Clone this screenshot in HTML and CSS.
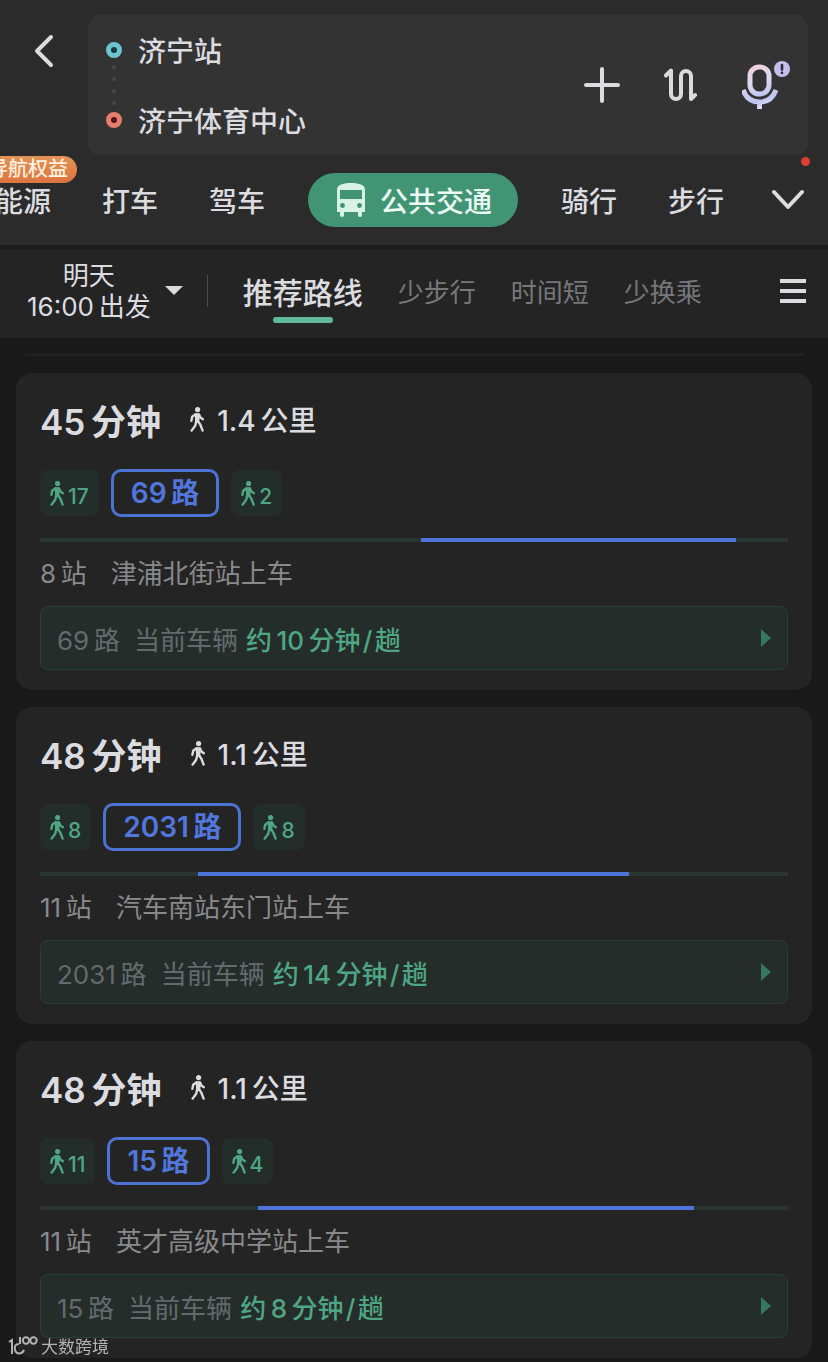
FILE: index.html
```html
<!DOCTYPE html>
<html lang="zh-CN">
  <head>
    <meta charset="UTF-8" />
    <meta name="viewport" content="width=device-width, initial-scale=1.0" />
    <title>公共交通路线</title>
    <link rel="stylesheet" href="styles.css">
  </head>
  <body>
    <svg class="symbols" aria-hidden="true">
      <symbol id="walker" viewBox="0 0 14 25">
        <circle cx="7.6" cy="2.6" r="2.6" fill="currentColor" />
        <path d="M4.800 6.200h4.200l1.100 1.400-.8 6.600-4.300.4z" fill="currentColor" />
        <path d="M5.600 7.200 2.200 9.800l-.8 4M9 7.400l1.400 3.200 2.500 1.600M6.400 13.600l-1.200 5.200-3.600 4.800M7.600 13.400l2.800 4.400 2.200 5.800" fill="none" stroke="currentColor" stroke-width="2.400" stroke-linecap="round" stroke-linejoin="round" />
      </symbol>
    </svg>

    <header class="header">
      <div class="search-row">
        <button class="back-button" aria-label="返回">
          <svg width="20" height="34" viewBox="0 0 20 34"><path d="M17 3 3 17l14 14" /></svg>
        </button>
        <form class="search-box">
          <div class="places">
            <label class="place">
              <span class="dot dot-start"></span>
              <input type="text" value="济宁站" aria-label="起点" />
            </label>
            <div class="dots"><i></i><i></i><i></i><i></i></div>
            <label class="place">
              <span class="dot dot-end"></span>
              <input type="text" value="济宁体育中心" aria-label="终点" />
            </label>
          </div>
          <div class="search-actions">
            <button type="button" aria-label="添加途经点">
              <svg width="36" height="36" viewBox="0 0 36 36"><path d="M18 2v32M2 18h32" /></svg>
            </button>
            <button type="button" aria-label="交换起终点">
              <svg width="34" height="34" viewBox="0 0 34 34"><path d="M2 7.500 7 2.500V26a5 5 0 0 0 10 0V8a5 5 0 0 1 10 0v23l4-4" /></svg>
            </button>
            <button type="button" aria-label="语音">
              <svg width="50" height="50" viewBox="3 0 50 50">
                <defs>
                  <linearGradient id="micFill" x1="10" y1="4" x2="26" y2="48" gradientUnits="userSpaceOnUse">
                    <stop offset="0" stop-color="#f3ccd8" />
                    <stop offset="0.4" stop-color="#ddd8ee" />
                    <stop offset="0.8" stop-color="#bcc4f4" />
                    <stop offset="1" stop-color="#e0e2f4" />
                  </linearGradient>
                </defs>
                <rect x="11" y="7" width="19" height="27" rx="9" fill="none" stroke="url(#micFill)" stroke-width="5" />
                <path d="M4 30c3 8 9 12 16.500 12s13.500-4 16.500-12M20.500 42v7" fill="none" stroke="url(#micFill)" stroke-width="5" stroke-linecap="butt" />
                <circle cx="43" cy="9" r="8" fill="#c5bdea" stroke="none" />
                <path d="M43 5v4.500M43 12.700v.3" stroke="#2d2b3a" stroke-width="2.600" stroke-linecap="round" />
              </svg>
            </button>
          </div>
        </form>
      </div>
      <div class="mode-row">
        <nav class="modes">
          <a href="#" class="mode">能源<span class="promo">导航权益</span></a>
          <a href="#" class="mode">打车</a>
          <a href="#" class="mode">驾车</a>
          <a href="#" class="mode mode-active">
            <svg width="30" height="36" viewBox="0 0 30 36">
              <path fill="#d9f3e6" fill-rule="evenodd" d="M1 8C1 3 6 1 15 1s14 2 14 7v22h-3v3a2 2 0 0 1-4 0v-3H8v3a2 2 0 0 1-4 0v-3H1zM4 8v9h22V8z" />
              <circle cx="6.500" cy="23.500" r="2.400" fill="#3f8f72" />
              <circle cx="23.500" cy="23.500" r="2.400" fill="#3f8f72" />
            </svg>
            公共交通
          </a>
          <a href="#" class="mode">骑行</a>
          <a href="#" class="mode">步行</a>
        </nav>
        <button class="more-button" aria-label="更多出行方式">
          <svg width="32" height="22" viewBox="0 0 32 22"><path d="m2 3 14 15L30 3" /></svg>
          <span class="red-dot"></span>
        </button>
      </div>
    </header>

    <div class="filter-bar">
      <button class="depart-button">
        <span class="depart-text">明天<br />16:00&thinsp;出发</span>
        <span class="caret"></span>
      </button>
      <nav class="filters">
        <a href="#" class="filter filter-active">推荐路线</a>
        <a href="#" class="filter">少步行</a>
        <a href="#" class="filter">时间短</a>
        <a href="#" class="filter">少换乘</a>
      </nav>
      <button class="menu-button" aria-label="菜单">
        <svg width="26" height="24" viewBox="0 0 26 24"><path d="M0 2h26M0 12h26M0 22h26" /></svg>
      </button>
    </div>

    <main class="routes">
      <div class="list-edge"></div>

      <article class="card">
        <h2 class="summary">
          <span class="duration">45&thinsp;分钟</span>
          <svg class="walker"><use href="#walker" /></svg>
          <span class="distance">1.4&thinsp;公里</span>
        </h2>
        <div class="steps">
          <span class="walk"><svg class="walker"><use href="#walker" /></svg>17</span>
          <span class="line">69&thinsp;路</span>
          <span class="walk"><svg class="walker"><use href="#walker" /></svg>2</span>
        </div>
        <div class="track"><div class="ride" style="margin-left: 50.9%; width: 42.1%"></div></div>
        <p class="stops"><span>8&thinsp;站</span><span>津浦北街站上车</span></p>
        <button class="status"><span>69&thinsp;路</span><span class="status-label">当前车辆</span><strong>约&thinsp;10&thinsp;分钟&hairsp;/&hairsp;趟</strong><i class="arrow"></i></button>
      </article>

      <article class="card">
        <h2 class="summary">
          <span class="duration">48&thinsp;分钟</span>
          <svg class="walker"><use href="#walker" /></svg>
          <span class="distance">1.1&thinsp;公里</span>
        </h2>
        <div class="steps">
          <span class="walk"><svg class="walker"><use href="#walker" /></svg>8</span>
          <span class="line">2031&thinsp;路</span>
          <span class="walk"><svg class="walker"><use href="#walker" /></svg>8</span>
        </div>
        <div class="track"><div class="ride" style="margin-left: 21.1%; width: 57.6%"></div></div>
        <p class="stops"><span>11&thinsp;站</span><span>汽车南站东门站上车</span></p>
        <button class="status"><span>2031&thinsp;路</span><span class="status-label">当前车辆</span><strong>约&thinsp;14&thinsp;分钟&hairsp;/&hairsp;趟</strong><i class="arrow"></i></button>
      </article>

      <article class="card">
        <h2 class="summary">
          <span class="duration">48&thinsp;分钟</span>
          <svg class="walker"><use href="#walker" /></svg>
          <span class="distance">1.1&thinsp;公里</span>
        </h2>
        <div class="steps">
          <span class="walk"><svg class="walker"><use href="#walker" /></svg>11</span>
          <span class="line">15&thinsp;路</span>
          <span class="walk"><svg class="walker"><use href="#walker" /></svg>4</span>
        </div>
        <div class="track"><div class="ride" style="margin-left: 29.1%; width: 58.4%"></div></div>
        <p class="stops"><span>11&thinsp;站</span><span>英才高级中学站上车</span></p>
        <button class="status"><span>15&thinsp;路</span><span class="status-label">当前车辆</span><strong>约&thinsp;8&thinsp;分钟&hairsp;/&hairsp;趟</strong><i class="arrow"></i></button>
      </article>
    </main>

    <div class="watermark">
      <svg width="30" height="22" viewBox="0 0 30 22"><path d="M1 6l3-2v14M16 14c-2 4.500-8 4.500-9 0s1-6 4-6M12 1v7" /><circle cx="18" cy="4.500" r="3.200" /><circle cx="25.500" cy="4.500" r="3.200" /></svg>
      大数跨境
    </div>
  </body>
</html>
```
FILE: styles.css
```css
* {
  box-sizing: border-box;
}
body {
  margin: 0;
  background-color: #191919;
  color: #dcdce0;
  font-family: Inter, "Noto Sans CJK SC", sans-serif;
  font-size: 26px;
}
a {
  color: inherit;
  text-decoration: none;
}
button,
input {
  padding: 0;
  border: none;
  background: none;
  color: inherit;
  font: inherit;
}
button {
  cursor: pointer;
}
svg {
  display: block;
  flex-shrink: 0;
}
.symbols {
  position: absolute;
  width: 0;
  height: 0;
}

/* header */
.header {
  background-color: #2b2b2b;
  padding-top: 15px;
}
.search-row {
  display: flex;
  padding-right: 20px;
}
.back-button {
  width: 88px;
  height: 72px;
  display: flex;
  align-items: center;
  justify-content: center;
}
.back-button svg,
.search-actions svg,
.more-button svg {
  fill: none;
  stroke: #dcdce0;
  stroke-width: 4;
  stroke-linecap: round;
  stroke-linejoin: round;
}
.search-box {
  flex: 1;
  min-width: 0;
  height: 140px;
  display: flex;
  align-items: center;
  padding: 0 16px 0 18px;
  border-radius: 12px;
  background-color: #333333;
}
.places {
  flex: 1;
  min-width: 0;
}
.place {
  display: flex;
  align-items: center;
  gap: 16px;
  height: 36px;
}
.place input {
  flex: 1;
  min-width: 0;
  height: 36px;
  font-size: 28px;
  font-weight: 500;
  outline: none;
}
.dot {
  width: 16px;
  height: 16px;
  border-radius: 50%;
  border: 5px solid #6cc5d0;
  background-color: #173a40;
}
.dot-end {
  border-color: #e57e6c;
  background-color: #4a1c16;
}
.dots {
  width: 16px;
  height: 40px;
  margin: -3px 0;
  display: flex;
  flex-direction: column;
  align-items: center;
  justify-content: space-between;
}
.dots i {
  width: 4px;
  height: 4px;
  border-radius: 50%;
  background-color: #484848;
}
.search-actions {
  display: flex;
  align-items: center;
  gap: 44px;
}

/* travel modes */
.mode-row {
  display: flex;
  height: 90px;
}
.modes {
  flex: 1;
  min-width: 0;
  display: flex;
  align-items: center;
  justify-content: flex-end;
  gap: 51px;
  overflow: hidden;
  font-size: 28px;
  font-weight: 500;
}
.mode {
  position: relative;
  flex-shrink: 0;
}
.mode-active {
  display: flex;
  align-items: center;
  gap: 14px;
  height: 54px;
  margin: 0 -8px;
  padding: 0 26px 0 28px;
  border-radius: 27px;
  background-color: #419575;
  color: #ebfaf3;
}
.promo {
  position: absolute;
  right: -26px;
  bottom: 37px;
  padding: 0 9px;
  border-radius: 14px 14px 14px 0;
  background: linear-gradient(#e39255, #dc7440);
  color: #fff0df;
  font-size: 20px;
  line-height: 27px;
  white-space: nowrap;
}
.more-button {
  position: relative;
  width: 104px;
  display: flex;
  align-items: center;
  justify-content: flex-end;
  padding-right: 24px;
}
.red-dot {
  position: absolute;
  top: 2px;
  right: 18px;
  width: 9px;
  height: 9px;
  border-radius: 50%;
  background-color: #d9402f;
}

/* filters */
.filter-bar {
  display: flex;
  align-items: center;
  height: 93px;
  padding: 0 22px 6px 27px;
  border-top: 4px solid #1c1c1c;
  background-color: #242424;
}
.depart-button {
  display: flex;
  align-items: center;
  gap: 14px;
}
.depart-text {
  line-height: 31px;
}
.caret {
  border: 9px solid transparent;
  border-top: 9px solid #dcdce0;
  border-bottom: none;
}
.filters {
  flex: 1;
  display: flex;
  align-items: center;
  gap: 35px;
  margin-left: 24px;
  color: #77777a;
}
.filters::before {
  content: "";
  width: 1px;
  height: 32px;
  background-color: #4c4c4e;
}
.filter-active {
  position: relative;
  color: #dcdce0;
  font-size: 30px;
  font-weight: 500;
}
.filter-active::after {
  content: "";
  position: absolute;
  left: 25%;
  right: 25%;
  bottom: -10px;
  height: 6px;
  border-radius: 3px;
  background-color: #5fb996;
}
.menu-button svg {
  stroke: #dcdce0;
  stroke-width: 4;
}

/* route cards */
.routes {
  display: flex;
  flex-direction: column;
  gap: 17px;
  padding: 15px 16px 4px;
}
.list-edge {
  height: 3px;
  margin: 0 9px;
  background-color: #212121;
}
.card {
  padding: 24px 24px 20px;
  border-radius: 16px;
  background-color: #242424;
}
.summary {
  display: flex;
  align-items: center;
  height: 44px;
  margin: 0 0 28px;
  font-weight: 500;
}
.duration {
  font-size: 35px;
  font-weight: 600;
}
.walker {
  width: 14px;
  height: 25px;
}
.summary .walker {
  margin: 0 13px 0 29px;
}
.distance {
  font-size: 28px;
}
.steps {
  display: flex;
  align-items: center;
  gap: 12px;
  height: 48px;
  margin-bottom: 21px;
}
.walk {
  display: flex;
  align-items: flex-end;
  gap: 4px;
  height: 46px;
  padding: 0 10px 10px;
  border-radius: 8px;
  background-color: #232e2a;
  color: #4fa684;
  font-size: 21px;
  font-weight: 500;
  line-height: 18px;
}
.line {
  height: 48px;
  padding: 0 17px;
  border: 3px solid #4c73d4;
  border-radius: 10px;
  color: #5176dc;
  font-size: 28px;
  font-weight: 600;
  line-height: 42px;
}
.track {
  height: 4px;
  margin-bottom: 16px;
  background-color: #2a3632;
}
.ride {
  height: 4px;
  background-color: #4f74d9;
}
.stops {
  display: flex;
  gap: 24px;
  margin: 0 0 16px;
  color: #89898c;
  line-height: 32px;
}
.status {
  display: flex;
  align-items: center;
  width: 100%;
  height: 64px;
  padding: 0 16px;
  border: 1px solid #27403a;
  border-radius: 8px;
  background-color: #242d2a;
  color: #636a6e;
}
.status-label {
  margin: 0 8px 0 14px;
}
.status strong {
  color: #4fa684;
  font-weight: 500;
}
.arrow {
  margin-left: auto;
  border: 9px solid transparent;
  border-left: 10px solid #37795f;
  border-right: none;
}

.watermark {
  position: fixed;
  left: 8px;
  bottom: 4px;
  display: flex;
  align-items: center;
  gap: 3px;
  color: #b4b4b4;
  font-size: 17px;
  line-height: 22px;
}
.watermark svg {
  fill: none;
  stroke: #b4b4b4;
  stroke-width: 2;
}
```
